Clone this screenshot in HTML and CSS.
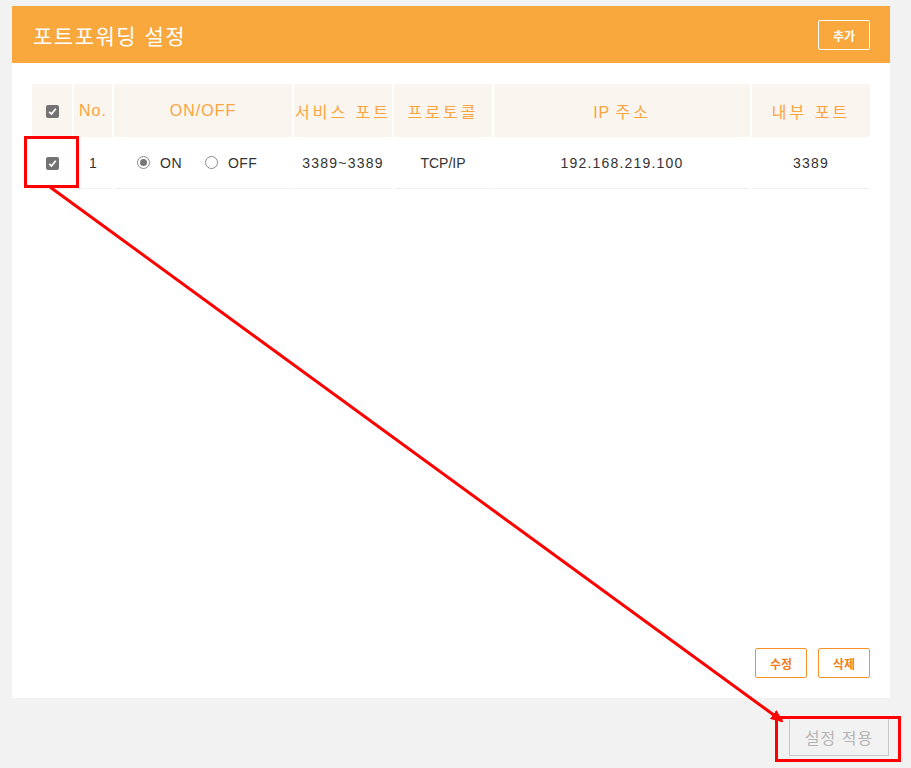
FILE: index.html
```html
<!DOCTYPE html>
<html lang="ko">
<head>
    <meta charset="UTF-8">
    <title>포트포워딩 설정</title>
    <link rel="stylesheet" href="styles.css">
</head>
<body>
    <div class="panel">
        <div class="panel-head">
            <h1>포트포워딩 설정</h1>
            <button class="btn-white">추가</button>
        </div>

        <div class="panel-body">
            <table class="pf-table">
                <colgroup>
                    <col style="width:40px">
                    <col style="width:38px">
                    <col style="width:178px">
                    <col style="width:98px">
                    <col style="width:98px">
                    <col style="width:256px">
                    <col style="width:118px">
                </colgroup>
                <thead>
                    <tr>
                        <th><span class="chk"><svg viewBox="0 0 13 13"><rect width="13" height="13" rx="2" fill="#737373"/><path d="M3.2 6.8 L5.5 9 L9.8 3.8" stroke="#fff" stroke-width="1.8" fill="none"/></svg></span></th>
                        <th>No.</th>
                        <th>ON/OFF</th>
                        <th class="ko">서비스 포트</th>
                        <th class="ko">프로토콜</th>
                        <th>IP <span class="ko">주소</span></th>
                        <th class="ko">내부 포트</th>
                    </tr>
                </thead>
                <tbody>
                    <tr>
                        <td><span class="chk"><svg viewBox="0 0 13 13"><rect width="13" height="13" rx="2" fill="#737373"/><path d="M3.2 6.8 L5.5 9 L9.8 3.8" stroke="#fff" stroke-width="1.8" fill="none"/></svg></span></td>
                        <td>1</td>
                        <td class="onoff">
                            <span class="radio on"></span><span class="radio-label">ON</span>
                            <span class="radio"></span><span class="radio-label">OFF</span>
                        </td>
                        <td class="num">3389~3389</td>
                        <td>TCP/IP</td>
                        <td class="num">192.168.219.100</td>
                        <td class="num">3389</td>
                    </tr>
                </tbody>
            </table>

            <div class="row-actions">
                <button class="btn-orange">수정</button>
                <button class="btn-orange">삭제</button>
            </div>
        </div>
    </div>

    <div class="page-actions">
        <button class="btn-apply" disabled>설정 적용</button>
    </div>

    <!-- 안내용 표시 -->
    <svg class="marks" viewBox="0 0 911 768">
        <defs>
            <marker id="head" markerWidth="13" markerHeight="11" refX="11" refY="5.5" orient="auto" markerUnits="userSpaceOnUse">
                <path d="M0 0 L13 5.5 L0 11 Z" fill="#f00"/>
            </marker>
        </defs>
        <rect x="25.5" y="137.5" width="52" height="49" fill="none" stroke="#f00" stroke-width="3"/>
        <line x1="50" y1="187" x2="782" y2="721" stroke="#f00" stroke-width="3" marker-end="url(#head)"/>
        <rect x="776.5" y="717.5" width="123" height="43" fill="none" stroke="#f00" stroke-width="3"/>
    </svg>
</body>
</html>
```

FILE: styles.css
```css
body {
    margin: 0;
    padding: 6px 21px 0 12px;
    background-color: #f2f2f2;
    font-family: "Liberation Sans", "Noto Sans CJK KR", sans-serif;
    color: #333;
    position: relative;
    height: 762px;
    overflow: hidden;
}
.panel {
    background: #fff;
    height: 692px;
    display: flex;
    flex-direction: column;
}
.panel-head {
    background-color: #f9a83e;
    height: 57px;
    display: flex;
    align-items: center;
    justify-content: space-between;
    padding: 0 20px 0 21px;
}
.panel-head h1 {
    margin: 0;
    color: #fff;
    font-family: "Noto Sans CJK KR", sans-serif;
    font-size: 21px;
    font-weight: normal;
    letter-spacing: 1.5px;
}
.btn-white {
    width: 52px;
    height: 30px;
    margin-top: 1px;
    border: 1px solid #fff;
    border-radius: 2px;
    background: transparent;
    color: #fff;
    font-family: "Noto Sans CJK KR", sans-serif;
    font-size: 12px;
    font-weight: bold;
    padding: 0;
}
.panel-body {
    flex: 1;
    display: flex;
    flex-direction: column;
    padding: 21px 20px 20px 20px;
}
.pf-table {
    border-collapse: separate;
    border-spacing: 2px 0;
    margin: 0 -2px;
    table-layout: fixed;
    width: 842px;
}
.pf-table th {
    height: 53px;
    padding: 0;
    background-color: #fbf5ef;
    color: #f9a43f;
    font-size: 16px;
    font-weight: normal;
    letter-spacing: 1px;
    text-align: center;
    white-space: nowrap;
}
.pf-table th.ko,
.pf-table .ko {
    font-family: "Noto Sans CJK KR", sans-serif;
    letter-spacing: 3px;
}
.pf-table td {
    height: 51px;
    padding: 0;
    border-bottom: 1px solid #efefef;
    text-align: center;
    font-size: 14px;
    color: #333;
    white-space: nowrap;
}
.pf-table td.num {
    letter-spacing: 1.2px;
}
.pf-table td.onoff {
    text-align: left;
    padding-left: 23px;
}
.chk {
    display: inline-block;
    width: 13px;
    height: 13px;
    vertical-align: middle;
}
.chk svg {
    display: block;
    width: 13px;
    height: 13px;
}
.radio {
    display: inline-block;
    width: 13px;
    height: 13px;
    border: 1px solid #8a8a8a;
    border-radius: 50%;
    vertical-align: -1px;
    position: relative;
    box-sizing: border-box;
    background: #fff;
}
.radio.on::after {
    content: "";
    position: absolute;
    left: 2px;
    top: 2px;
    width: 7px;
    height: 7px;
    border-radius: 50%;
    background: #777;
}
.radio-label {
    margin: 0 19px 0 10px;
    letter-spacing: 0.5px;
}
.row-actions {
    margin-top: auto;
    display: flex;
    justify-content: flex-end;
    gap: 11px;
}
.btn-orange {
    width: 52px;
    height: 30px;
    border: 1px solid #f5922a;
    border-radius: 2px;
    background: #fff;
    color: #f07d1a;
    font-family: "Noto Sans CJK KR", sans-serif;
    font-size: 12px;
    font-weight: bold;
    padding: 0;
}
.page-actions {
    display: flex;
    justify-content: flex-end;
    padding: 20px 0 0 0;
    margin-right: 1px;
}
.btn-apply {
    width: 100px;
    height: 38px;
    border: 1px solid #c8c8c8;
    background: #f2f2f2;
    color: #b5b5b5;
    font-family: "Noto Sans CJK KR", sans-serif;
    font-size: 16px;
    letter-spacing: 1px;
    padding: 0;
}
.marks {
    position: absolute;
    left: 0;
    top: 0;
    width: 911px;
    height: 768px;
    pointer-events: none;
}
```
